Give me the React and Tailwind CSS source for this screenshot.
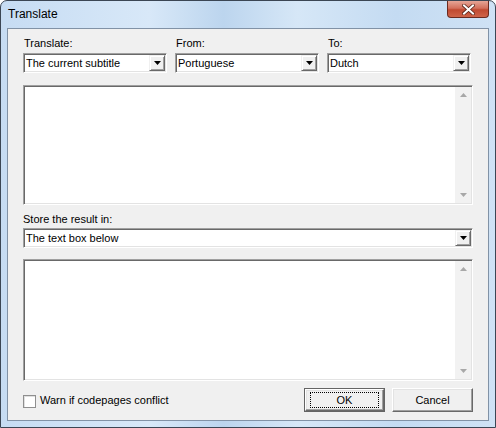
import React from 'react';

const font = { fontFamily: '"Liberation Sans", Arial, sans-serif' };

function Arrow() {
  return (
    <svg width="7" height="4" viewBox="0 0 7 4">
      <path d="M0 0h7L3.5 4z" fill="#000" />
    </svg>
  );
}

function Combo({ value, className }) {
  return (
    <div className={`flex h-[20px] items-center border border-t-[#a0a0a0] border-l-[#a0a0a0] border-b-white border-r-white bg-white shadow-[inset_1px_1px_0_#696969,inset_-1px_-1px_0_#e3e3e3] ${className}`}>
      <span className="flex-1 truncate pl-[2px] text-[11px] leading-none text-black">{value}</span>
      <div className="mr-[1px] flex h-[16px] w-[16px] items-center justify-center border border-t-[#f0f0f0] border-l-[#f0f0f0] border-b-[#696969] border-r-[#696969] bg-[#f0f0f0] shadow-[inset_1px_1px_0_#fff,inset_-1px_-1px_0_#a0a0a0]">
        <Arrow />
      </div>
    </div>
  );
}

function Memo({ className }) {
  return (
    <div className={`flex border border-t-[#a0a0a0] border-l-[#a0a0a0] border-b-white border-r-white bg-white shadow-[inset_1px_1px_0_#696969,inset_-1px_-1px_0_#e3e3e3] ${className}`}>
      <div className="flex-1" />
      <div className="my-[1px] mr-[1px] flex w-[16px] flex-col items-center justify-between bg-[#f2f2f2] py-[6px]">
        <svg width="7" height="4" viewBox="0 0 7 4"><path d="M3.5 0L7 4H0z" fill="#a8a8a8" /></svg>
        <svg width="7" height="4" viewBox="0 0 7 4"><path d="M0 0h7L3.5 4z" fill="#a8a8a8" /></svg>
      </div>
    </div>
  );
}

function Button({ children, primary }) {
  return (
    <div className={`flex h-[24px] w-[81px] items-center justify-center bg-[#f0f0f0] ${primary ? 'border border-[#646464]' : ''}`}>
      <div className="flex h-full w-full items-center justify-center border border-t-white border-l-white border-b-[#696969] border-r-[#696969] shadow-[inset_-1px_-1px_0_#a0a0a0,inset_1px_1px_0_#e3e3e3]">
        <div className={`flex h-[16px] w-[69px] items-center justify-center text-[11px] text-black ${primary ? 'border border-dotted border-black' : ''}`}>
          {children}
        </div>
      </div>
    </div>
  );
}

export default function App() {
  return (
    <div className="h-[428px] w-[496px] bg-white" style={font}>
      <div className="flex h-full w-full flex-col rounded-t-[7px] border border-[#3b4654] bg-[linear-gradient(90deg,#c6dcf3_0%,#d8e8f8_30%,#bcd5ee_45%,#d6e7f7_60%,#c4dbf2_80%,#cfe2f5_100%)]">
        <div className="flex h-[27px] items-start justify-between pl-[7px] pr-[6px]">
          <span className="mt-[7px] text-[12px] leading-none text-black">Translate</span>
          <div className="flex h-[17px] w-[42px] items-center justify-center rounded-b-[4px] border border-t-0 border-[#6b2a1f] bg-[linear-gradient(180deg,#e6a596_0%,#d3705c_45%,#c04a31_55%,#cf6449_100%)]">
            <svg width="13" height="11" viewBox="0 0 13 11">
              <path d="M2 1.5l9 8M11 1.5l-9 8" stroke="#5a2418" strokeWidth="3.6" strokeLinecap="square" />
              <path d="M2 1.5l9 8M11 1.5l-9 8" stroke="#fff" strokeWidth="2" strokeLinecap="square" />
            </svg>
          </div>
        </div>
        <div className="mx-[6px] mb-[6px] flex flex-1 flex-col border border-[#8192a6] bg-[#f0f0f0] px-[15px] text-[11px] text-black">
          <div className="mt-[8px] flex gap-[8px]">
            <div className="flex w-[144px] flex-col gap-[4px]">
              <span className="pl-[1px] leading-[12px]">Translate:</span>
              <Combo value="The current subtitle" />
            </div>
            <div className="flex w-[144px] flex-col gap-[4px]">
              <span className="pl-[1px] leading-[12px]">From:</span>
              <Combo value="Portuguese" />
            </div>
            <div className="flex w-[144px] flex-col gap-[4px]">
              <span className="pl-[1px] leading-[12px]">To:</span>
              <Combo value="Dutch" />
            </div>
          </div>
          <Memo className="mt-[12px] h-[120px]" />
          <span className="mt-[8px] leading-[12px]">Store the result in:</span>
          <Combo value="The text box below" className="mt-[3px]" />
          <Memo className="mt-[11px] h-[122px]" />
          <div className="mt-[7px] flex items-center">
            <div className="mt-[2px] h-[13px] w-[13px] border border-[#8f8f8f] bg-white shadow-[inset_1px_1px_0_#e0e0e0]" />
            <span className="ml-[4px] mt-[1px]">Warn if codepages conflict</span>
            <div className="ml-auto flex gap-[7px]">
              <Button primary>OK</Button>
              <Button>Cancel</Button>
            </div>
          </div>
        </div>
      </div>
    </div>
  );
}
